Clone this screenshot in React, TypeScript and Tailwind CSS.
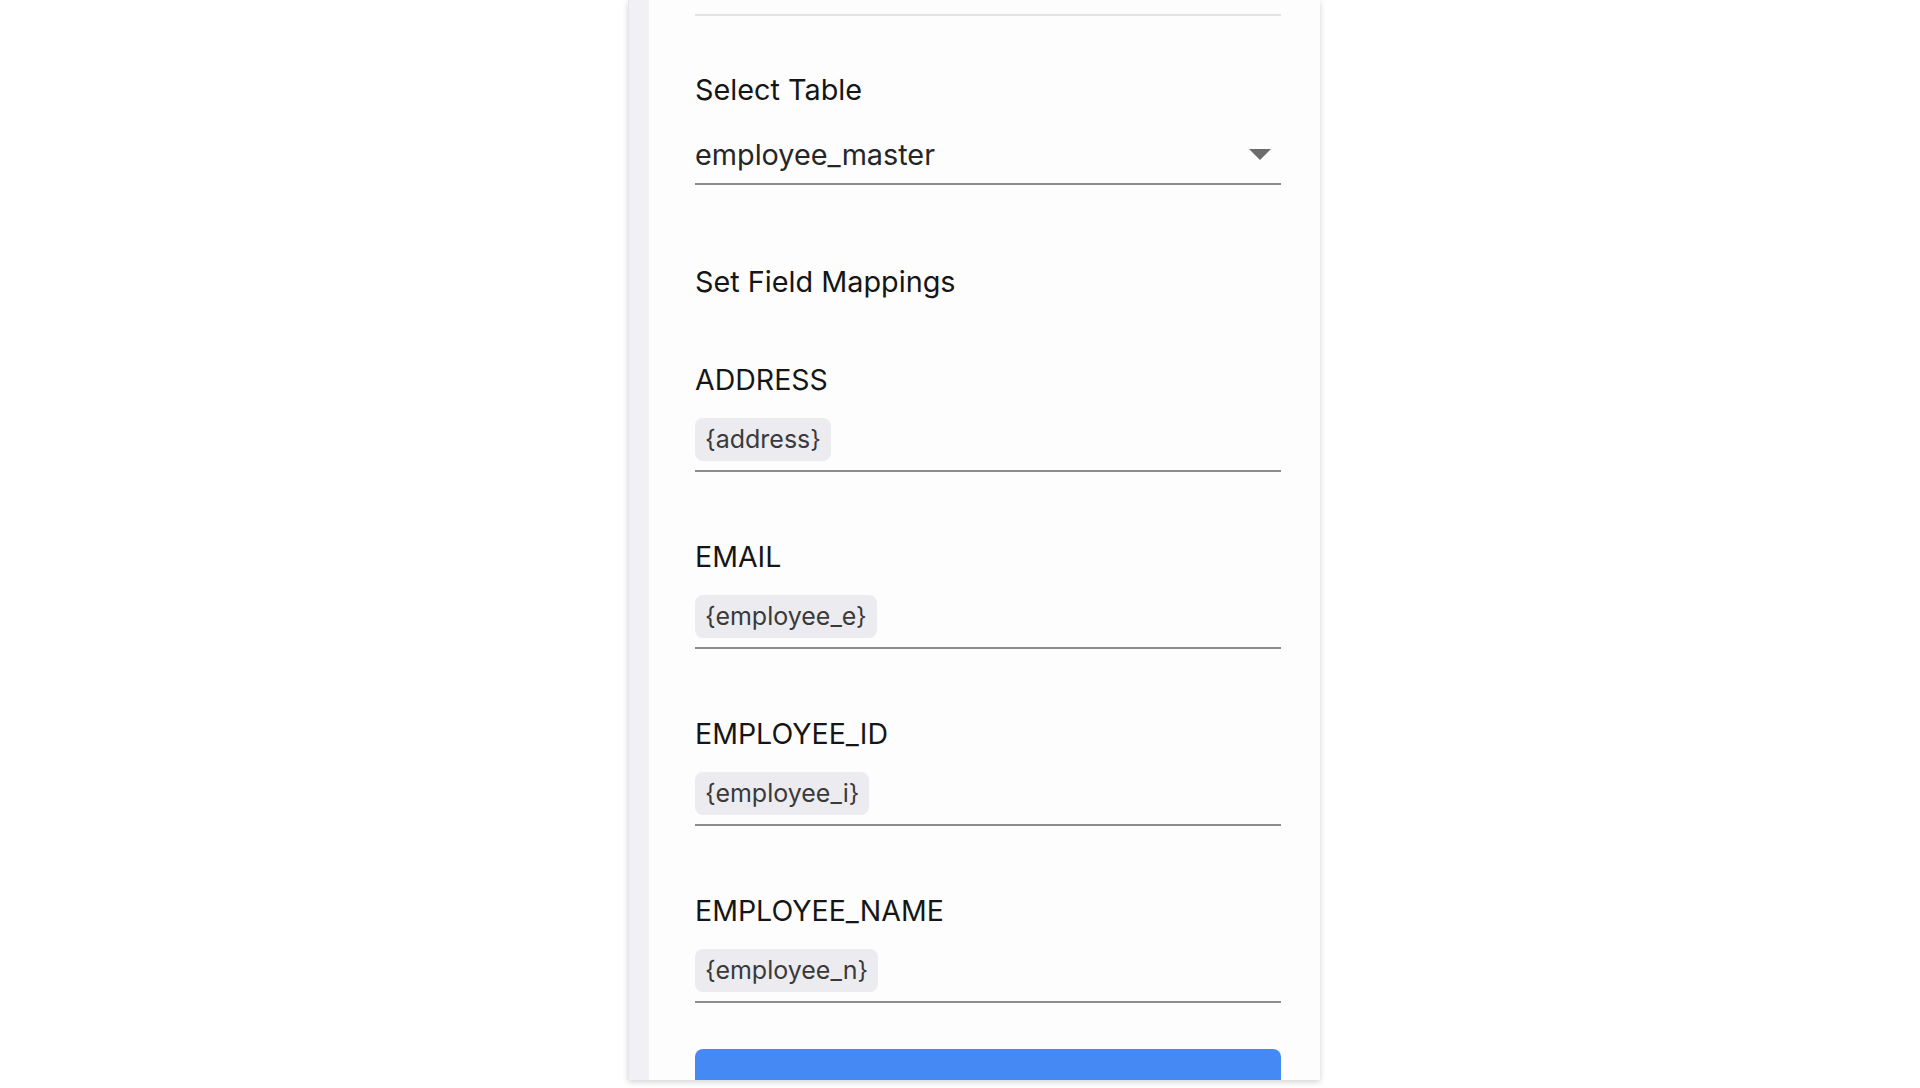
import React from "react";

const mappings = [
  { field: "ADDRESS", token: "{address}" },
  { field: "EMAIL", token: "{employee_e}" },
  { field: "EMPLOYEE_ID", token: "{employee_i}" },
  { field: "EMPLOYEE_NAME", token: "{employee_n}" },
];

function FieldMapping({ field, token, first }: { field: string; token: string; first?: boolean }) {
  return (
    <div className={first ? "mt-[66px]" : "mt-[69px]"}>
      <div className="h-[32px] leading-[32px] text-[28.5px] text-[#161616]">{field}</div>
      <div className="mt-[22px] pb-[9px] border-b-2 border-[#8c8c8c]">
        <span className="inline-flex h-[43px] items-center rounded-[8px] bg-[#ececf0] px-[10px] text-[25px] text-[#3a3a3a]">
          {token}
        </span>
      </div>
    </div>
  );
}

export default function App() {
  return (
    <div
      className="min-h-[1088px] w-full bg-white"
      style={{ fontFamily: "Inter, 'Noto Sans', sans-serif" }}
    >
      <div className="ml-[628px] flex h-[1080px] w-[692px] overflow-hidden shadow-[0_2px_6px_rgba(0,0,0,0.18)]">
        <div className="w-[21px] shrink-0 border-l border-[#e6e6ea] bg-[#f1f0f5]" />
        <div className="flex-1 bg-[#fdfdfe] pl-[46px] pr-[39px] pt-[14px]">
          <div className="h-[2px] bg-[#e4e4e8]" />

          <div className="mt-[58px] h-[32px] leading-[32px] text-[28.8px] text-[#161616]">Select Table</div>
          <div className="mt-[33px] flex items-center justify-between border-b-2 border-[#8c8c8c] pb-[12px]">
            <span className="h-[32px] leading-[32px] text-[28.8px] text-[#262626]">employee_master</span>
            <svg width="22" height="12" viewBox="0 0 22 12" className="mr-[10px]">
              <path d="M0 0 L22 0 L11 11 Z" fill="#6b6b6b" />
            </svg>
          </div>

          <div className="mt-[81px] h-[32px] leading-[32px] text-[28.8px] text-[#161616]">Set Field Mappings</div>

          {mappings.map((m, i) => (
            <FieldMapping key={m.field} field={m.field} token={m.token} first={i === 0} />
          ))}

          <button className="mt-[46px] h-[80px] w-full rounded-[8px] bg-[#4589f5]" />
        </div>
      </div>
    </div>
  );
}
